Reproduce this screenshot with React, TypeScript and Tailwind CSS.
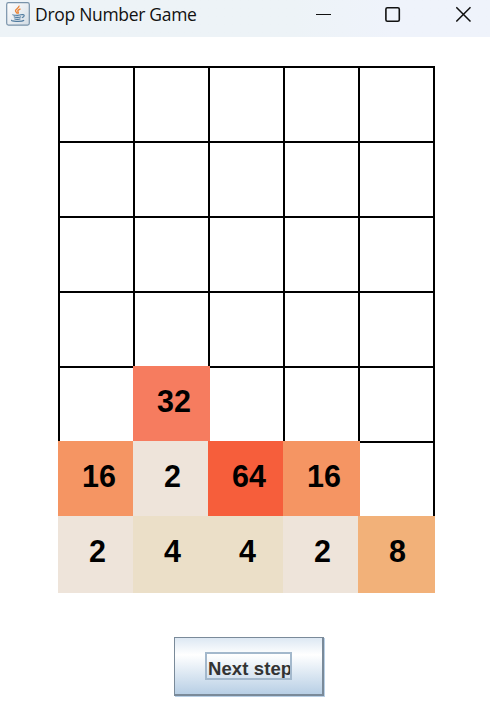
const BOARD: number[][] = [
  [0, 0, 0, 0, 0],
  [0, 0, 0, 0, 0],
  [0, 0, 0, 0, 0],
  [0, 0, 0, 0, 0],
  [0, 32, 0, 0, 0],
  [16, 2, 64, 16, 0],
  [2, 4, 4, 2, 8],
];

const TILE_COLORS: Record<number, string> = {
  2: "bg-[#eee4da]",
  4: "bg-[#ebdfc8]",
  8: "bg-[#f2b179]",
  16: "bg-[#f59563]",
  32: "bg-[#f67c5f]",
  64: "bg-[#f65e3b]",
};

function JavaIcon() {
  return (
    <svg width="24" height="24" viewBox="0 0 24 24" fill="none">
      <defs>
        <linearGradient id="plate" x1="0" y1="0" x2="1" y2="1">
          <stop offset="0" stopColor="#ffffff" />
          <stop offset="1" stopColor="#d3dce4" />
        </linearGradient>
      </defs>
      <rect x="0.7" y="0.7" width="22.6" height="22.4" rx="1.8" fill="url(#plate)" stroke="#7892a9" strokeWidth="1.2" />
      <path d="M12.9 3.6c1 2.2-3.4 3.1-3.4 5.2 0 1.3 1.5 1.8 1.9 2.9M14.5 6.8c-2.2.9-3.3 1.8-2.5 2.9.6.8.5 1.3-.2 2" stroke="#ec8436" strokeWidth="1.4" />
      <path d="M7.2 12.5c-2 .8 6.6 1.2 8.5.1M7.8 14.6c1.2 1 5.7 1 7.3.1M8.4 16.7c1.2.8 4.6.8 6 0M15.8 12.7c3.5-.6 2.8 2.5.1 2.9M6 18.1c-2.5 1.2 9.7 2 12.1.2" stroke="#507b9f" strokeWidth="1.2" />
    </svg>
  );
}

function TitleBar() {
  return (
    <header className="flex h-[37px] justify-between bg-linear-to-r from-[#edf3f7] from-60% to-[#eff3fb] to-80%">
      <div className="flex items-start pl-[6px] pt-[2px]">
        <JavaIcon />
        <h1 className="ml-[5px] whitespace-nowrap font-['Open_Sans',sans-serif] text-[17.5px] leading-[25px] tracking-[-0.3px] text-[#111]">
          Drop Number Game
        </h1>
      </div>
      <div className="flex pr-[18px] pt-[6px] text-[#111]">
        <button aria-label="Minimize" className="mr-[53px] h-4 w-4">
          <svg width="16" height="16" viewBox="0 0 16 16">
            <path d="M0 8.5h15" stroke="currentColor" />
          </svg>
        </button>
        <button aria-label="Maximize" className="mr-[55px] h-4 w-4">
          <svg width="16" height="16" viewBox="0 0 16 16" fill="none">
            <rect x="0.9" y="1.8" width="13.4" height="13.4" rx="1.5" stroke="currentColor" strokeWidth="1.6" />
          </svg>
        </button>
        <button aria-label="Close" className="h-4 w-4">
          <svg width="16" height="16" viewBox="0 0 16 16">
            <path d="M.3 1.3l14.2 14.2M14.5 1.3L.3 15.5" stroke="currentColor" strokeWidth="1.5" />
          </svg>
        </button>
      </div>
    </header>
  );
}

function Cell({ value }: { value: number }) {
  if (value === 0) {
    return <div className="h-[77px] w-[77px] border-2 border-black" />;
  }
  const indent = value > 9 ? "pl-[24px]" : "pl-[31px]";
  return (
    <div className={`z-10 h-[77px] w-[77px] pt-[18px] leading-[34px] ${indent} ${TILE_COLORS[value]}`}>{value}</div>
  );
}

export default function App() {
  return (
    <div className="h-[725px] w-[490px] overflow-hidden bg-white">
      <TitleBar />
      <main className="flex flex-col pt-[29px]">
        <div className="ml-[58px] grid grid-cols-[repeat(5,75px)] auto-rows-[75px] font-['Liberation_Sans',Arial,sans-serif] text-[30.5px] font-bold text-black">
          {BOARD.flat().map((value, i) => (
            <Cell key={i} value={value} />
          ))}
        </div>
        <button className="ml-[174px] mt-[46px] flex h-[59px] w-[150px] items-start border border-r-2 border-b-2 border-[#7a8a99] bg-linear-to-b from-[#dde8f3] via-white via-30% to-[#b8cfe5] pl-[30px] pt-[14px] shadow-[1px_1px_0_#b8cfe5]">
          <span className="block h-[28px] w-[87px] overflow-hidden whitespace-nowrap border-2 border-[#a3b8cc] pl-[1px] text-left font-['Liberation_Sans',Arial,sans-serif] text-[18.5px] font-bold leading-[29px] tracking-[0.1px] text-[#333]">
            Next step
          </span>
        </button>
      </main>
    </div>
  );
}
